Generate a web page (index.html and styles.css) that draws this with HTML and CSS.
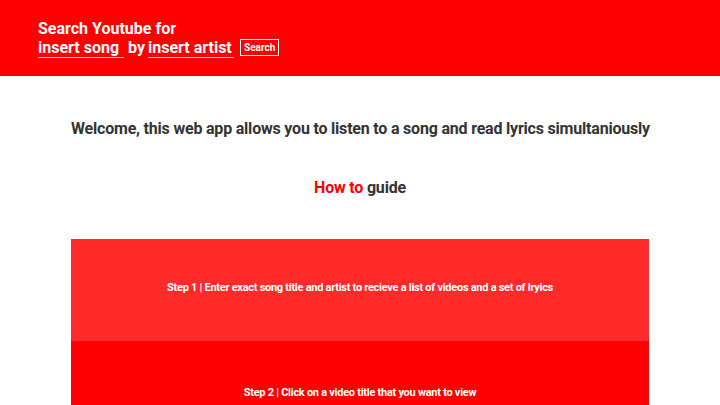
FILE: index.html
```html
<!DOCTYPE html>
<html>
<head>
<meta charset="utf-8">
<link rel="stylesheet" href="styles.css">
</head>
<body>
<header class="top">
  <form class="search">
    <div class="title">Search Youtube for</div>
    <div class="row">
      <input class="field" type="text" placeholder="insert song">
      <span class="by">by</span>
      <input class="field" type="text" placeholder="insert artist">
      <button class="btn" type="button">Search</button>
    </div>
  </form>
</header>
<main class="main">
  <h1 class="welcome">Welcome, this web app allows you to listen to a song and read lyrics simultaniously</h1>
  <h2 class="guide"><span class="red">How to</span> guide</h2>
  <section class="steps">
    <div class="step step1">Step 1 | Enter exact song title and artist to recieve a list of videos and a set of lryics</div>
    <div class="step step2">Step 2 | Click on a video title that you want to view</div>
  </section>
</main>
</body>
</html>
```
FILE: styles.css
```css
* { box-sizing: border-box; }
html, body { margin: 0; padding: 0; }
body {
  font-family: Roboto, "Liberation Sans", sans-serif;
  background: #fff;
  overflow: hidden;
  height: 405px;
}
.top {
  background: #ff0000;
  height: 76px;
  padding: 19px 38px 0;
  color: #fff;
}
.title {
  font-size: 16px;
  font-weight: 700;
  line-height: 19px;
}
.row {
  display: flex;
  align-items: center;
  height: 19px;
}
.field {
  width: 86px;
  background: transparent;
  border: none;
  border-bottom: 1px solid rgba(255,255,255,0.8);
  color: #fff;
  font-family: inherit;
  font-size: 16px;
  font-weight: 700;
  padding: 0;
  height: 20px;
  line-height: 17px;
  outline: none;
}
.field::placeholder { color: #fff; opacity: 1; }
.by {
  font-size: 16px;
  font-weight: 700;
  margin: 0 3px 0 4px;
}
.btn {
  margin-left: 6px;
  background: transparent;
  border: 1px solid #fff;
  color: #fff;
  font-family: inherit;
  font-size: 10px;
  font-weight: 700;
  padding: 0 3px;
  height: 17px;
  line-height: 15px;
}
.main {
  padding: 0 71px;
}
.welcome {
  margin: 0;
  padding-top: 43px;
  text-align: center;
  font-size: 16px;
  font-weight: 700;
  color: #333;
  line-height: 19px;
  white-space: nowrap;
  letter-spacing: -0.2px;
}
.guide {
  margin: 0;
  padding-top: 40px;
  text-align: center;
  font-size: 16px;
  font-weight: 700;
  color: #333;
  line-height: 19px;
  letter-spacing: -0.2px;
}
.red { color: #ff0000; }
.steps {
  margin-top: 42px;
}
.step {
  height: 102px;
  display: flex;
  align-items: center;
  justify-content: center;
  color: #fff;
  font-size: 11px;
  font-weight: 700;
  letter-spacing: -0.27px;
}
.step1 { background: #ff2a2a; padding-bottom: 6px; }
.step2 { background: #ff0000; padding-top: 0; }
```
